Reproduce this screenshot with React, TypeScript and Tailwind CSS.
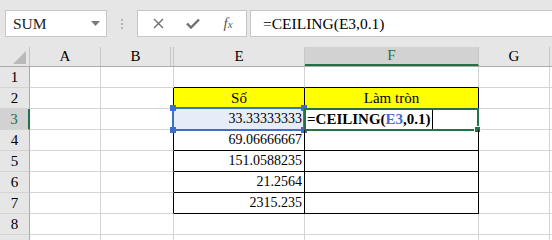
import React from 'react';

const serif = "font-['Liberation_Serif','Times_New_Roman',Times,serif]";

const gridLine = 'border-[#d4d4d4]';

const rows = [1, 2, 3, 4, 5, 6, 7, 8, 9];

const numbers: Record<number, string> = {
  3: '33.33333333',
  4: '69.06666667',
  5: '151.0588235',
  6: '21.2564',
  7: '2315.235',
};

const inTable = (r: number) => r >= 2 && r <= 7;

const ColHeader = ({ label, width, selected }: { label: string; width: string; selected?: boolean }) => (
  <div
    className={`${width} h-full flex items-center justify-center border-r border-[#c6c6c6] text-[15px] ${
      selected ? 'bg-[#d2d2d2] text-[#217346] border-b-2 border-b-[#217346]' : 'text-black'
    }`}
  >
    {label}
  </div>
);

const Toolbar = () => (
  <div className="h-[47px] flex items-start pt-[10px] bg-[#e6e6e6]">
    {/* Name box */}
    <div className="ml-[5px] w-[102px] h-[27px] bg-white border border-[#c6c6c6] flex items-center justify-between pl-[7px] pr-[6px]">
      <span className={`${serif} text-[15.5px] text-[#222] leading-none`}>SUM</span>
      <svg width="9" height="5" viewBox="0 0 9 5">
        <path d="M0 0 L9 0 L4.5 5 Z" fill="#7a7a7a" />
      </svg>
    </div>
    {/* dotted grip */}
    <div className="w-[30px] h-[27px] flex flex-col items-center justify-center gap-[2px]">
      <div className="w-[2px] h-[2px] bg-[#b5b5b5]" />
      <div className="w-[2px] h-[2px] bg-[#b5b5b5]" />
      <div className="w-[2px] h-[2px] bg-[#b5b5b5]" />
    </div>
    {/* cancel / enter / fx */}
    <div className="w-[110px] h-[27px] bg-white border border-[#c6c6c6] flex items-center">
      <div className="w-[38px] flex justify-center pl-[2px]">
        <svg width="11" height="11" viewBox="0 0 11 11">
          <path d="M1 1 L10 10 M10 1 L1 10" stroke="#6e6e6e" strokeWidth="1.4" />
        </svg>
      </div>
      <div className="w-[34px] flex justify-center">
        <svg width="14" height="11" viewBox="0 0 14 11">
          <path d="M1 5.5 L5 9.5 L13 1.5" stroke="#6e6e6e" strokeWidth="2.4" fill="none" />
        </svg>
      </div>
      <div className="w-[36px] flex justify-center">
        <span className={`${serif} italic text-[15px] text-[#5a5a5a] leading-none`}>
          f<span className="text-[11px]">x</span>
        </span>
      </div>
    </div>
    {/* formula input */}
    <div className="ml-[3px] flex-1 h-[27px] bg-white border border-[#c6c6c6] border-r-0 flex items-center pl-[12px]">
      <span className={`${serif} text-[15.5px] text-black leading-none`}>=CEILING(E3,0.1)</span>
    </div>
  </div>
);

const HeaderRow = () => (
  <div className={`${serif} h-[20px] flex bg-[#e6e6e6] border-b border-[#ababab]`}>
    <div className="w-[30px] h-full border-r border-[#c6c6c6] flex items-end justify-end pr-[3px] pb-[2px]">
      <svg width="13" height="13" viewBox="0 0 13 13">
        <path d="M13 0 L13 13 L0 13 Z" fill="#b9b9b9" />
      </svg>
    </div>
    <ColHeader label="A" width="w-[71px]" />
    <ColHeader label="B" width="w-[70px]" />
    <div className="w-[3px] h-full border-r border-[#c6c6c6]" />
    <ColHeader label="E" width="w-[131px]" />
    <ColHeader label="F" width="w-[174px]" selected />
    <ColHeader label="G" width="w-[71px]" />
    <div className="flex-1" />
  </div>
);

const SheetRow = ({ r }: { r: number }) => {
  const table = inTable(r);
  const above = r === 1;
  const sel = r === 3;
  return (
    <div className={`${serif} h-[21px] flex`}>
      <div
        className={`w-[30px] h-full border-b border-[#d4d4d4] flex items-center justify-center text-[15px] ${
          sel
            ? 'bg-[#d2d2d2] text-[#217346] border-r-2 border-r-[#217346]'
            : 'bg-[#e6e6e6] text-black border-r border-r-[#ababab]'
        }`}
      >
        {r}
      </div>
      <div className={`w-[71px] h-full border-r border-b ${gridLine}`} />
      <div className={`w-[70px] h-full border-b ${gridLine}`} />
      <div
        className={`w-[3px] h-full border-b border-r ${gridLine} ${table ? 'border-r-black' : ''}`}
      />
      {/* E */}
      <div
        className={`relative w-[131px] h-full border-r border-b ${gridLine} ${
          table ? 'border-r-black border-b-black' : ''
        } ${above ? 'border-b-black' : ''} ${r === 2 ? 'bg-[#ffff00]' : ''} flex items-center ${
          r === 2 ? 'justify-center text-[15px]' : 'justify-end pr-[2px] text-[14px]'
        } text-black`}
      >
        {sel && (
          <div className="absolute -left-[2px] -top-[2px] -right-[1px] -bottom-[2px] bg-[#e6edf8] border-2 border-[#3c6fc8]">
            <div className="absolute -left-[4px] -top-[4px] w-[6px] h-[6px] bg-[#3c6fc8]" />
            <div className="absolute -left-[4px] -bottom-[4px] w-[6px] h-[6px] bg-[#3c6fc8]" />
            <div className="absolute -right-[4px] -top-[4px] w-[6px] h-[6px] bg-[#3c6fc8]" />
            <div className="absolute -right-[4px] -bottom-[4px] w-[6px] h-[6px] bg-[#3c6fc8]" />
          </div>
        )}
        <span className="relative leading-none">{r === 2 ? 'Số' : numbers[r] ?? ''}</span>
      </div>
      {/* F */}
      <div
        className={`relative w-[174px] h-full border-r border-b ${gridLine} ${
          table ? 'border-r-black border-b-black' : ''
        } ${above ? 'border-b-black' : ''} ${r === 2 ? 'bg-[#ffff00] justify-center' : ''} flex items-center text-[15px] text-black`}
      >
        {r === 2 && <span className="leading-none">Làm tròn</span>}
        {sel && (
          <div className="absolute -left-[1px] -top-[1px] -right-[1px] -bottom-[2px] border-2 border-[#217346] bg-white flex items-center pl-[1px]">
            <span className="font-bold text-[15px] leading-none">
              =CEILING(<span className="text-[#3c6fc8]">E3</span>,0.1)
            </span>
            <div className="w-px h-[19px] bg-black ml-[1px]" />
            <div className="absolute -right-[4px] -bottom-[4px] w-[7px] h-[7px] bg-[#217346] border border-white" />
          </div>
        )}
      </div>
      {/* G */}
      <div className={`w-[71px] h-full border-r border-b ${gridLine}`} />
      <div className={`flex-1 h-full border-b ${gridLine}`} />
    </div>
  );
};

const App = () => {
  return (
    <div className="w-[552px] h-[240px] overflow-hidden bg-white">
      <Toolbar />
      <HeaderRow />
      {rows.map((r) => (
        <SheetRow key={r} r={r} />
      ))}
    </div>
  );
};

export default App;
